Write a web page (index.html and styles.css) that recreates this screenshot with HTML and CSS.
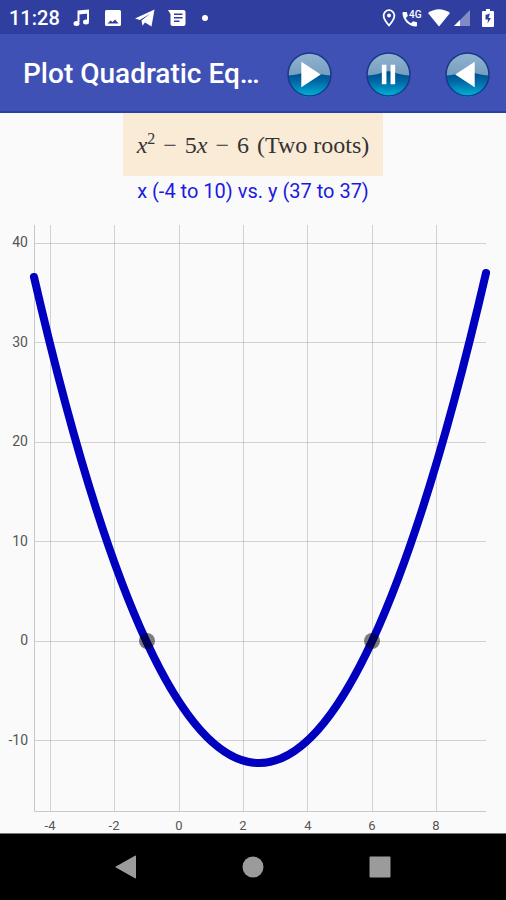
FILE: index.html
```html
<!DOCTYPE html>
<html lang="en">
<head>
<meta charset="utf-8">
<meta name="viewport" content="width=device-width, initial-scale=1">
<title>Plot Quadratic Equation</title>
<link rel="stylesheet" href="styles.css">
</head>
<body>
<div class="status">
  <span class="time">11:28</span>
  <svg class="icon" viewBox="0 0 18 18" aria-hidden="true"><path d="M5.500 13V2.500L15 1.500V12M5.500 4.500l9.500-1" fill="none" stroke="#fff" stroke-width="2"/><ellipse cx="3.500" cy="14.500" rx="3" ry="2.500"/><ellipse cx="13" cy="13" rx="3" ry="2.500"/></svg>
  <svg class="icon" viewBox="0 0 18 18" aria-hidden="true"><path fill-rule="evenodd" d="M2.500 1h13Q17 1 17 2.500v13q0 1.500-1.500 1.500h-13Q1 17 1 15.500v-13Q1 1 2.500 1zM3.500 14.500h11l-3.400-4-2.600 2.600-1.900-1.600z"/></svg>
  <svg class="icon icon-wide" viewBox="0 0 20 18" aria-hidden="true"><path d="M0 9.500 19.500.5 16.500 17.500 10 13.500 7.500 16.800 6.500 11.500 15 4.800 4.800 11z"/></svg>
  <svg class="icon" viewBox="0 0 18 18" aria-hidden="true"><path fill-rule="evenodd" d="M0 1h15.500Q17.500 1 17.500 3v12q0 2-2 2h-11q-2 0-2-2V5zM6 4.500V6h8.500V4.500zM6 8v1.500h8.500V8zm0 3.500V13h5.500v-1.500z"/></svg>
  <span class="dot"></span>
  <div class="signals">
    <svg class="icon pin" viewBox="0 0 14 18" aria-hidden="true"><path d="M7 1.200a5.400 5.400 0 0 0-5.400 5.400C1.600 10.500 7 16.500 7 16.500s5.400-6 5.400-9.900A5.400 5.400 0 0 0 7 1.200z" fill="none" stroke="#fff" stroke-width="1.800"/><circle cx="7" cy="6.500" r="2"/></svg>
    <svg class="icon call" viewBox="0 0 20 18" aria-hidden="true"><path d="M1.500 3h3.300l1 4-2 2c1.300 2.400 2.800 3.900 5.200 5.200l2-2 4 1v3.300q0 1-1 1C7 17.500.5 11 .5 4q0-1 1-1z"/><text x="7" y="9" class="net">4G</text></svg>
    <svg class="icon wifi" viewBox="0 0 22 18" aria-hidden="true"><path d="M0 4Q11-3.500 22 4L11 17.500z"/></svg>
    <svg class="icon" viewBox="0 0 18 18" aria-hidden="true"><path d="M17 1v16H1z" opacity=".4"/><path d="M7 11v6H1z"/></svg>
    <svg class="icon battery" viewBox="0 0 12 18" aria-hidden="true"><path fill-rule="evenodd" d="M4 0h4v2h3q1 0 1 1v14q0 1-1 1H1q-1 0-1-1V3q0-1 1-1h3zM8 4.500 3.500 6v4.500H6l-.5 4L9 9H6.500z"/></svg>
  </div>
</div>

<header class="appbar">
  <h1>Plot Quadratic Eq…</h1>
  <button type="button" aria-label="Play"><svg viewBox="0 0 44 44">
    <defs>
      <linearGradient id="sky" x1="0" y1="0" x2="0" y2="1"><stop offset="0" stop-color="#92b4d2"/><stop offset=".5" stop-color="#789fbf"/></linearGradient>
      <linearGradient id="sea" x1="0" y1="0" x2="0" y2="1"><stop offset="0" stop-color="#004b8d"/><stop offset=".4" stop-color="#0068a5"/><stop offset="1" stop-color="#00b6dc"/></linearGradient>
      <g id="orb"><circle cx="22" cy="22" r="21" fill="url(#sky)"/><path d="M1 23Q12 22 17 19.500 22 18 27 19.500 32 22 43 23A21 21 0 0 1 1 23z" fill="url(#sea)"/><circle cx="22" cy="22" r="21" fill="none" stroke="#193889" stroke-width="1.500"/></g>
    </defs>
    <use href="#orb"/><path d="M14 9.500v25L33 22z" fill="#fff"/></svg></button>
  <button type="button" aria-label="Pause"><svg viewBox="0 0 44 44"><use href="#orb"/><path d="M15.500 12.500h4.500v19h-4.500zM24 12.500h4.500v19H24z" fill="#fff"/></svg></button>
  <button type="button" aria-label="Back"><svg viewBox="0 0 44 44"><use href="#orb"/><path d="M29 9.500v25L10 22z" fill="#fff"/></svg></button>
</header>

<main>
  <div class="formula"><span><i>x</i><sup>2</sup></span><span>−</span><span>5<i>x</i></span><span>−</span><span>6</span><span>(Two roots)</span></div>
  <p class="range">x (-4 to 10) vs. y (37 to 37)</p>
  <svg class="chart" viewBox="0 206 506 627" role="img" aria-label="Parabola crossing zero at -1 and 6">
    <path class="grid" d="M50.500 225V812M114.500 225V812M179.500 225V812M243.500 225V812M307.500 225V812M372.500 225V812M436.500 225V812M34 243.500H486M34 342.500H486M34 442.500H486M34 541.500H486M34 641.500H486M34 740.500H486"/>
    <path class="axis" d="M34.500 225V811.500H486"/>
    <g class="ylabels"><text x="28" y="247">40</text><text x="28" y="347">30</text><text x="28" y="446">20</text><text x="28" y="546">10</text><text x="28" y="645">0</text><text x="28" y="745">-10</text></g>
    <g class="xlabels"><text x="50" y="830">-4</text><text x="114" y="830">-2</text><text x="179" y="830">0</text><text x="243" y="830">2</text><text x="308" y="830">4</text><text x="372" y="830">6</text><text x="436" y="830">8</text></g>
    <path class="curve" d="M34 277Q259 1251 486 273"/>
    <circle class="root" cx="147" cy="641" r="8"/><circle class="root" cx="372" cy="641" r="8"/>
  </svg>
</main>

<nav class="navbar">
  <button type="button" aria-label="Back"><svg viewBox="0 0 24 24"><path d="M20.500 1Q22 0 22 1.500v21q0 1.500-1.500.5L1 12z"/></svg></button>
  <button type="button" aria-label="Home"><svg viewBox="0 0 24 24"><circle cx="12" cy="12" r="10.500"/></svg></button>
  <button type="button" aria-label="Recent apps"><svg viewBox="0 0 24 24"><rect x="1.500" y="1.500" width="21" height="21" rx="1"/></svg></button>
</nav>
</body>
</html>
```
FILE: styles.css
```css
* { box-sizing: border-box; }

body {
  margin: 0;
  min-height: 100vh;
  display: flex;
  flex-direction: column;
  background: #fafafa;
  font-family: Roboto, "Liberation Sans", sans-serif;
}

button {
  display: block;
  padding: 0;
  border: 0;
  background: none;
}

button svg { display: block; width: 100%; }

.status {
  display: flex;
  align-items: center;
  gap: 13px;
  height: 34px;
  padding: 2px 12px 0 9px;
  background: #303f9f;
  color: #fff;
}

.time {
  font-size: 20px;
  font-weight: 500;
}

.icon {
  flex: none;
  width: 18px;
  height: 18px;
  fill: #fff;
}

.icon-wide { width: 20px; }

.dot {
  width: 6px;
  height: 6px;
  margin-left: 3px;
  border-radius: 50%;
  background: #fff;
}

.signals {
  display: flex;
  gap: 6px;
  margin-left: auto;
}

.pin { width: 14px; }
.call { width: 20px; }
.wifi { width: 22px; margin-right: -3px; }
.battery { width: 12px; margin-left: 5px; }
.net { font-size: 10px; font-weight: 500; }

.appbar {
  display: flex;
  align-items: center;
  gap: 34px;
  height: 79px;
  padding: 3px 16px 0 23px;
  background: #3f51b5;
  border-bottom: 2px solid #2441a5;
  color: #fff;
}

.appbar h1 {
  flex: 1;
  margin: 0 -8px 0 0;
  font-size: 28px;
  font-weight: 500;
  line-height: 32px;
  white-space: nowrap;
}

.appbar button { flex: none; width: 45px; }

main {
  flex: 1;
  display: flex;
  flex-direction: column;
  align-items: center;
}

.formula {
  display: flex;
  align-items: center;
  justify-content: center;
  gap: 8px;
  height: 63px;
  padding: 0 14px;
  background: #faebd7;
  color: #333;
  font-family: "Liberation Serif", serif;
  font-size: 24px;
  line-height: 28px;
}

.formula sup {
  font-size: 16px;
  line-height: 0;
}

.range {
  margin: 0;
  color: #1a1ae0;
  font-size: 20px;
  line-height: 30px;
}

.chart {
  display: block;
  width: 100%;
}

.grid, .axis, .curve { fill: none; }
.grid { stroke: #000; stroke-opacity: 0.16; }
.axis { stroke: #c8c8c8; }
.curve { stroke: #0000be; stroke-width: 8px; stroke-linecap: round; }
.root { fill: #000; fill-opacity: 0.5; }

.ylabels, .xlabels { fill: #555; }
.ylabels { font-size: 14px; text-anchor: end; }
.xlabels { font-size: 13px; text-anchor: middle; }

.navbar {
  display: flex;
  justify-content: center;
  align-items: center;
  gap: 103px;
  height: 67px;
  background: #000;
  border-top: 1px solid #777;
}

.navbar button { width: 24px; }
.navbar svg { fill: #9b9b9b; }
```
